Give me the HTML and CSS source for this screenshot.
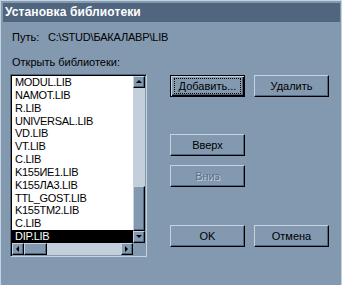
FILE: index.html
```html
<!DOCTYPE html>
<html lang="ru">
<head>
    <meta charset="UTF-8">
    <title>Установка библиотеки</title>
    <link rel="stylesheet" href="styles.css">
</head>
<body>
    <div class="window">
        <div class="titlebar">Установка библиотеки</div>
        <div class="content">
            <div class="path-row">
                <span class="path-label">Путь:</span>
                <span class="path-value">C:\STUD\БАКАЛАВР\LIB</span>
            </div>
            <div class="main">
                <div class="libs">
                    <div class="caption">Открыть библиотеки:</div>
                    <div class="listbox">
                        <ul class="items">
                            <li>MODUL.LIB</li>
                            <li>NAMOT.LIB</li>
                            <li>R.LIB</li>
                            <li>UNIVERSAL.LIB</li>
                            <li>VD.LIB</li>
                            <li>VT.LIB</li>
                            <li>C.LIB</li>
                            <li>K155ИЕ1.LIB</li>
                            <li>K155ЛА3.LIB</li>
                            <li>TTL_GOST.LIB</li>
                            <li>K155TM2.LIB</li>
                            <li>C.LIB</li>
                            <li class="selected">DIP.LIB</li>
                        </ul>
                        <div class="vscroll">
                            <div class="arrow"><span class="tri up"></span></div>
                            <div class="track">
                                <div class="thumb vthumb"></div>
                            </div>
                            <div class="arrow"><span class="tri down"></span></div>
                        </div>
                        <div class="hscroll">
                            <div class="arrow"><span class="tri left"></span></div>
                            <div class="track">
                                <div class="thumb hthumb"></div>
                            </div>
                            <div class="arrow"><span class="tri right"></span></div>
                        </div>
                        <div class="corner"></div>
                    </div>
                </div>
                <div class="buttons">
                    <div class="btn-row">
                        <button class="btn default"><span class="focus">Добавить...</span></button>
                        <button class="btn">Удалить</button>
                    </div>
                    <div class="btn-row move-up">
                        <button class="btn">Вверх</button>
                    </div>
                    <div class="btn-row move-down">
                        <button class="btn disabled">Вниз</button>
                    </div>
                    <div class="btn-row confirm">
                        <button class="btn">OK</button>
                        <button class="btn">Отмена</button>
                    </div>
                </div>
            </div>
        </div>
    </div>
</body>
</html>
```

FILE: styles.css
```css
body {
    margin: 0;
    padding: 0;
    font-family: 'Liberation Sans', Arial, sans-serif;
    font-size: 11px;
    background: #8399b0;
}

.window {
    width: 342px;
    height: 285px;
    box-sizing: border-box;
    background: #8399b0;
    border-top: 1px solid #c5d3e1;
    border-left: 1px solid #c5d3e1;
    border-right: 1px solid #c5d3e1;
    padding: 2px 1px 0 2px;
}

.titlebar {
    height: 19px;
    line-height: 19px;
    background: #50667f;
    color: #fff;
    font-weight: bold;
    font-size: 12px;
    letter-spacing: 0.1px;
    padding-left: 2px;
}

.content {
    padding: 9px 0 0 7px;
}

.path-row {
    display: flex;
    line-height: 13px;
    padding-left: 2px;
    color: #000;
}

.path-label {
    width: 36px;
}

.path-value {
    letter-spacing: -0.2px;
}

.main {
    display: flex;
    align-items: flex-start;
    margin-top: 12px;
}

.caption {
    line-height: 13px;
    padding-left: 2px;
    margin-bottom: 5px;
}

/* sunken list box with scrollbars */
.listbox {
    display: grid;
    grid-template-columns: 121px 12px;
    grid-template-rows: 167px 12px;
    border: 1px solid;
    border-color: #52677e #c5d3e1 #c5d3e1 #52677e;
    box-shadow: inset 1px 1px 0 #000, inset -1px -1px 0 #8399b0;
    padding: 1px;
}

.items {
    list-style: none;
    margin: 0;
    padding: 0;
    background: #fff;
    overflow: hidden;
}

.items li {
    height: 12.85px;
    line-height: 12.85px;
    padding-left: 3px;
    letter-spacing: -0.3px;
    white-space: nowrap;
}

.items li.selected {
    background: #000;
    color: #fff;
}

.vscroll {
    display: flex;
    flex-direction: column;
    background: #c3cfdb;
}

.hscroll {
    display: flex;
    background: #c3cfdb;
}

.vscroll .track {
    flex: 1;
    display: flex;
    flex-direction: column;
    justify-content: flex-end;
}

.hscroll .track {
    flex: 1;
    display: flex;
}

.arrow,
.thumb {
    box-sizing: border-box;
    background: #8399b0;
    border: 1px solid;
    border-color: #c5d3e1 #000 #000 #c5d3e1;
    box-shadow: inset -1px -1px 0 #52677e;
}

.arrow {
    width: 12px;
    height: 12px;
    display: flex;
    align-items: center;
    justify-content: center;
}

.vthumb {
    height: 45px;
}

.hthumb {
    width: 23px;
}

.corner {
    background: #8399b0;
}

.tri {
    width: 0;
    height: 0;
    border: 3px solid transparent;
    margin-right: 1px;
    margin-bottom: 1px;
}

.tri.up {
    border-top-width: 0;
    border-bottom-color: #000;
}

.tri.down {
    border-bottom-width: 0;
    border-top-color: #000;
}

.tri.left {
    border-left-width: 0;
    border-right-color: #000;
}

.tri.right {
    border-right-width: 0;
    border-left-color: #000;
}

/* dialog buttons */
.buttons {
    display: flex;
    flex-direction: column;
    margin-left: 23px;
    margin-top: 19px;
}

.btn-row {
    display: flex;
    gap: 9px;
}

.move-up {
    margin-top: 37px;
}

.move-down {
    margin-top: 9px;
}

.confirm {
    margin-top: 38px;
}

.btn {
    box-sizing: border-box;
    width: 75px;
    height: 22px;
    padding: 0;
    font-family: inherit;
    font-size: 11px;
    color: #000;
    background: #8399b0;
    border: 1px solid;
    border-color: #c5d3e1 #000 #000 #c5d3e1;
    box-shadow: inset -1px -1px 0 #52677e;
    display: flex;
    align-items: center;
    justify-content: center;
}

.btn.default {
    border: 1px solid #000;
    box-shadow: inset 1px 1px 0 #c5d3e1, inset -1px -1px 0 #000, inset -2px -2px 0 #52677e;
}

.focus {
    box-sizing: border-box;
    width: 67px;
    height: 16px;
    line-height: 14px;
    border: 1px dotted #000;
    text-align: center;
}

.btn.disabled {
    color: #5a7088;
    text-shadow: 1px 1px 0 #c5d3e1;
}
```
